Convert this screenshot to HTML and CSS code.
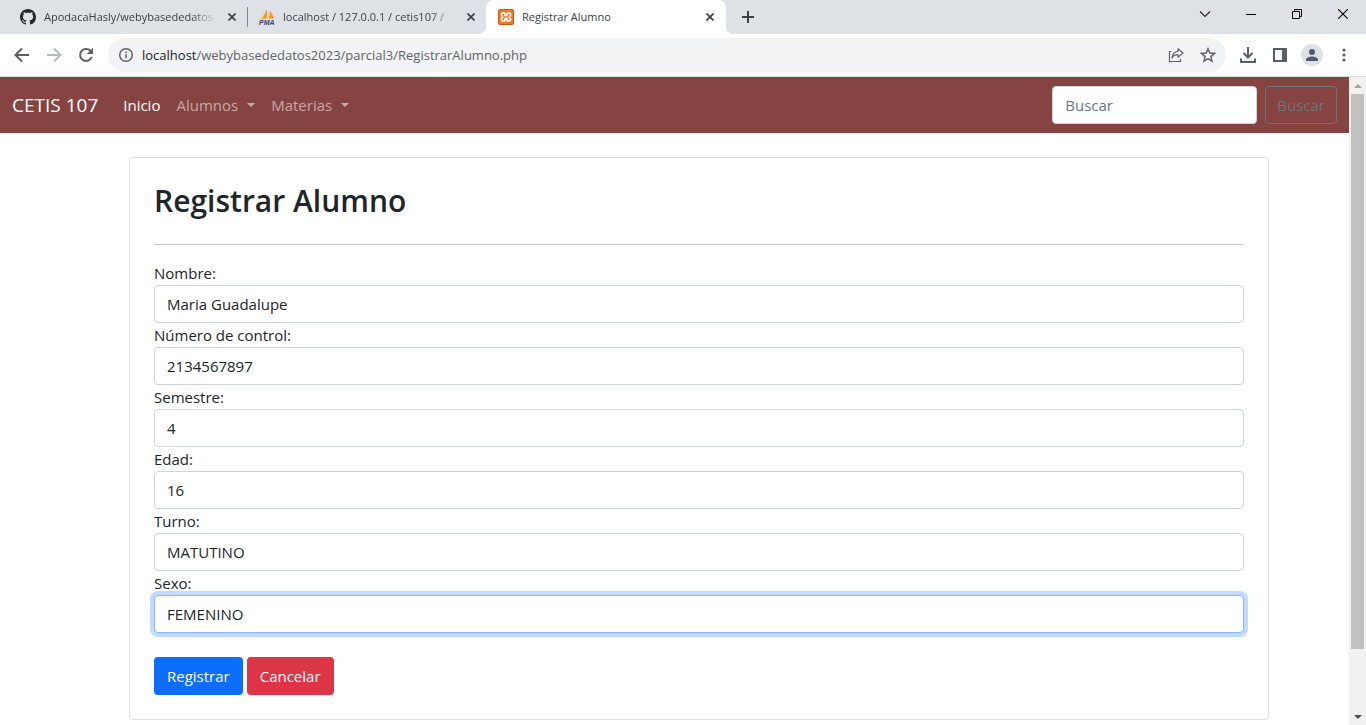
FILE: index.html
```html
<!DOCTYPE html>
<html lang="es">
<head>
<meta charset="utf-8">
<title>Registrar Alumno</title>
<link rel="stylesheet" href="styles.css">
</head>
<body>
<header class="browser">
  <div class="tabstrip">
    <div class="tab">
      <svg class="favicon" viewBox="0 0 16 16"><path fill="#24292f" d="M8 0C3.58 0 0 3.58 0 8c0 3.54 2.29 6.53 5.47 7.59.4.07.55-.17.55-.38 0-.19-.01-.82-.01-1.49-2.01.37-2.53-.49-2.69-.94-.09-.23-.48-.94-.82-1.13-.28-.15-.68-.52-.01-.53.63-.01 1.08.58 1.23.82.72 1.21 1.87.87 2.33.66.07-.52.28-.87.51-1.07-1.78-.2-3.64-.89-3.64-3.95 0-.87.31-1.59.82-2.15-.08-.2-.36-1.02.08-2.12 0 0 .67-.21 2.2.82.64-.18 1.32-.27 2-.27s1.36.09 2 .27c1.53-1.04 2.2-.82 2.2-.82.44 1.1.16 1.92.08 2.12.51.56.82 1.27.82 2.15 0 3.07-1.87 3.75-3.65 3.95.29.25.54.73.54 1.48 0 1.07-.01 1.93-.01 2.2 0 .21.15.46.55.38A8.01 8.01 0 0 0 16 8c0-4.42-3.58-8-8-8z"/></svg>
      <span class="tab-title tab-title-fade">ApodacaHasly/webybasededatos</span>
      <button class="tab-close" aria-label="Cerrar pestaña"><svg width="8" height="8" viewBox="0 0 8 8"><path d="M.5.5l7 7M7.5.5l-7 7" stroke="#3c4043" stroke-width="1.7"/></svg></button>
    </div>
    <div class="tab tab-divided">
      <svg class="favicon" viewBox="0 0 16 16"><path fill="#f8971d" d="M7.500 0C8.500 3 8.700 6 7.500 9.500L2.500 10.300C5 7 6.600 4 7.500 0zM10.500 1.500C13 4 14.300 7 15 9.700L9.500 9.400C11 6.500 11.200 4 10.500 1.500z"/><path fill="#fbc27a" d="M4.500 3C4.500 6 3 8.500 0 10.500L2.300 10.300C4.300 8 5 6 4.500 3zM9 3c1 2.500.8 4.500-.2 6.400H8z"/><text class="pma" x="0" y="15.500">PMA</text></svg>
      <span class="tab-title tab-title-fade">localhost / 127.0.0.1 / cetis107 /</span>
      <button class="tab-close" aria-label="Cerrar pestaña"><svg width="8" height="8" viewBox="0 0 8 8"><path d="M.5.5l7 7M7.500.5l-7 7" stroke="#3c4043" stroke-width="1.7"/></svg></button>
    </div>
    <div class="tab tab-active">
      <svg class="favicon" viewBox="0 0 16 16"><rect x=".5" y=".5" width="15" height="15" rx="1.500" fill="#f37623" stroke="#c85a12"/><path d="M5.300 3.800a1.900 1.900 0 0 0-1 3.500q.6.700 0 1.400a1.900 1.900 0 1 0 2.800 2.200V9.500h1.800v1.400a1.900 1.900 0 1 0 2.800-2.200q-.6-.7 0-1.400a1.900 1.900 0 1 0-2.800-2.200v1.400H7.100V5.100a1.900 1.900 0 0 0-1.800-1.300z" fill="none" stroke="#fff" stroke-width="1.700"/></svg>
      <span class="tab-title">Registrar Alumno</span>
      <button class="tab-close" aria-label="Cerrar pestaña"><svg width="8" height="8" viewBox="0 0 8 8"><path d="M.5.5l7 7M7.500.5l-7 7" stroke="#3c4043" stroke-width="1.7"/></svg></button>
    </div>
    <button class="new-tab" aria-label="Nueva pestaña"><svg width="12" height="12" viewBox="0 0 12 12"><path d="M6 0v12M0 6h12" stroke="#3c4043" stroke-width="2"/></svg></button>
    <div class="window-controls">
      <button class="window-btn" aria-label="Buscar pestañas"><svg width="12" height="12" viewBox="0 0 12 12"><path d="M1 3.500l5 5 5-5" fill="none" stroke="#222" stroke-width="1.100"/></svg></button>
      <button class="window-btn" aria-label="Minimizar"><svg width="10" height="10" viewBox="0 0 10 10"><path d="M0 5.500h10" stroke="#000"/></svg></button>
      <button class="window-btn" aria-label="Restaurar"><svg width="10" height="10" viewBox="0 0 10 10"><path d="M.5 2.500h7v7h-7zM2.500 2.500v-2h7v7h-2" fill="none" stroke="#000"/></svg></button>
      <button class="window-btn" aria-label="Cerrar"><svg width="10" height="10" viewBox="0 0 10 10"><path d="M0 0l10 10M10 0L0 10" stroke="#000" stroke-width="1.100"/></svg></button>
    </div>
  </div>
  <div class="toolbar">
    <div class="tool-group">
      <button class="tool" aria-label="Atrás"><svg width="16" height="16" viewBox="0 0 16 16"><path d="M15 8H2M8 1.500L1.500 8 8 14.500" fill="none" stroke="#5a5e63" stroke-width="2"/></svg></button>
      <button class="tool" aria-label="Adelante"><svg width="16" height="16" viewBox="0 0 16 16"><path d="M1 8h13M8 1.500L14.500 8 8 14.500" fill="none" stroke="#b9bbbe" stroke-width="2"/></svg></button>
      <button class="tool" aria-label="Recargar"><svg width="16" height="16" viewBox="0 0 16 16"><path d="M13.700 10A6 6 0 1 1 12.300 3.700L14 5.400" fill="none" stroke="#5a5e63" stroke-width="2"/><path d="M15 .8V7H8.800z" fill="#5a5e63"/></svg></button>
    </div>
    <div class="omnibox">
      <svg width="16" height="16" viewBox="0 0 16 16"><circle cx="8" cy="8" r="6.300" fill="none" stroke="#5f6368" stroke-width="1.500"/><path d="M8 7.200v4M8 4.400v1.600" stroke="#5f6368" stroke-width="1.600"/></svg>
      <span class="url"><span class="url-host">localhost</span>/webybasededatos2023/parcial3/RegistrarAlumno.php</span>
      <button class="tool" aria-label="Compartir"><svg width="16" height="16" viewBox="0 0 16 16"><path d="M3.500 4.500H1.500v10h11V12" fill="none" stroke="#5f6368" stroke-width="1.200"/><path d="M10 1.800L15 6l-5 4.200V7.700C7 7.600 5.200 8.600 4 11c.3-3.500 2.300-6.300 6-6.700z" fill="none" stroke="#5f6368" stroke-width="1.200" stroke-linejoin="round"/></svg></button>
      <button class="tool" aria-label="Añadir a marcadores"><svg width="16" height="16" viewBox="0 0 16 16"><path d="M8 1.800l1.800 4.300 4.700.4-3.600 3.100 1.100 4.600L8 11.700l-4 2.500 1.100-4.600L1.500 6.500l4.700-.4z" fill="none" stroke="#5f6368" stroke-width="1.500"/></svg></button>
    </div>
    <div class="tool-group">
      <button class="tool" aria-label="Descargas"><svg width="16" height="16" viewBox="0 0 16 16"><path d="M8 0v10M3.500 6L8 10.500 12.500 6M1 11.500V15h14v-3.500" fill="none" stroke="#5a5e63" stroke-width="2"/></svg></button>
      <button class="tool" aria-label="Panel lateral"><svg width="14" height="14" viewBox="0 0 14 14"><path d="M1 1h12v12H1z" fill="none" stroke="#5a5e63" stroke-width="2"/><path d="M9 0h5v14H9z" fill="#5a5e63"/></svg></button>
      <button class="tool" aria-label="Perfil"><svg width="22" height="22" viewBox="0 0 22 22"><circle cx="11" cy="11" r="11" fill="#dee1e6"/><circle cx="11" cy="8" r="3" fill="#515b70"/><path d="M5 17v-1.500c0-2 4-3 6-3s6 1 6 3V17z" fill="#515b70"/></svg></button>
      <button class="tool" aria-label="Menú"><svg width="4" height="14" viewBox="0 0 4 14"><g fill="#5a5e63"><circle cx="2" cy="2" r="1.600"/><circle cx="2" cy="7" r="1.600"/><circle cx="2" cy="12" r="1.600"/></g></svg></button>
    </div>
  </div>
</header>
<div class="viewport">
  <div class="page">
    <nav class="navbar">
      <a class="brand" href="#">CETIS 107</a>
      <ul class="nav-list">
        <li><a class="nav-link nav-link-active" href="#">Inicio</a></li>
        <li><a class="nav-link dropdown" href="#">Alumnos</a></li>
        <li><a class="nav-link dropdown" href="#">Materias</a></li>
      </ul>
      <form class="search">
        <input class="field search-field" type="search" placeholder="Buscar" aria-label="Buscar">
        <button class="btn btn-outline" type="button">Buscar</button>
      </form>
    </nav>
    <main class="content">
      <form class="card">
        <h1 class="title">Registrar Alumno</h1>
        <hr class="rule">
        <label class="label" for="nombre">Nombre:</label>
        <input class="field" id="nombre" type="text" value="Maria Guadalupe">
        <label class="label" for="control">Número de control:</label>
        <input class="field" id="control" type="text" value="2134567897">
        <label class="label" for="semestre">Semestre:</label>
        <input class="field" id="semestre" type="text" value="4">
        <label class="label" for="edad">Edad:</label>
        <input class="field" id="edad" type="text" value="16">
        <label class="label" for="turno">Turno:</label>
        <input class="field" id="turno" type="text" value="MATUTINO">
        <label class="label" for="sexo">Sexo:</label>
        <input class="field field-focus" id="sexo" type="text" value="FEMENINO">
        <div class="actions">
          <button class="btn btn-primary" type="button">Registrar</button>
          <button class="btn btn-danger" type="button">Cancelar</button>
        </div>
      </form>
    </main>
  </div>
  <div class="scrollbar" aria-hidden="true">
    <span class="arrow"><svg width="8" height="4" viewBox="0 0 8 4"><path d="M0 4l4-4 4 4z" fill="#a3a3a3"/></svg></span>
    <div class="track"><div class="thumb"></div></div>
    <span class="arrow"><svg width="8" height="4" viewBox="0 0 8 4"><path d="M0 0l4 4 4-4z" fill="#505050"/></svg></span>
  </div>
</div>
</body>
</html>
```
FILE: styles.css
```css
* { box-sizing: border-box; }
body {
  margin: 0;
  min-height: 100vh;
  display: flex;
  flex-direction: column;
  font-family: "Open Sans", "Noto Sans", sans-serif;
  font-size: 15px;
  line-height: 24px;
  color: #212529;
  background: #fff;
}
button, input { font: inherit; }
button { cursor: pointer; }
svg { display: block; flex: none; }

/* Browser frame */
.tabstrip {
  display: flex;
  height: 34px;
  padding-left: 8px;
  background: #dee1e6;
}
.tab {
  position: relative;
  display: flex;
  align-items: center;
  gap: 8px;
  flex: 0 1 239px;
  min-width: 0;
  padding: 0 7px 0 12px;
  font-size: 11px;
  color: #3c4043;
}
.tab-divided::before {
  content: "";
  position: absolute;
  left: 0;
  top: 7px;
  width: 1px;
  height: 20px;
  background: #808387;
}
.tab-active {
  flex-basis: 240px;
  padding-right: 8px;
  background: #fff;
  border-radius: 8px 8px 0 0;
}
.tab-active::before, .tab-active::after {
  content: "";
  position: absolute;
  bottom: 0;
  width: 8px;
  height: 8px;
}
.tab-active::before {
  left: -8px;
  background: radial-gradient(circle at 0 0, #dee1e6 8px, #fff 8px);
}
.tab-active::after {
  right: -8px;
  background: radial-gradient(circle at 100% 0, #dee1e6 8px, #fff 8px);
}
.favicon { width: 16px; height: 16px; }
.pma { font: italic bold 7px "Liberation Sans", sans-serif; fill: #3c3c78; }
.tab-title {
  flex: 1;
  min-width: 0;
  white-space: nowrap;
}
.tab-title-fade {
  mask-image: linear-gradient(to right, #000 calc(100% - 24px), transparent);
}
.tab-close, .new-tab, .window-btn, .tool {
  display: flex;
  align-items: center;
  justify-content: center;
  flex: none;
  padding: 0;
  border: 0;
  background: none;
}
.tab-close { width: 16px; height: 16px; }
.new-tab { width: 28px; margin-left: 8px; }
.window-controls { display: flex; margin-left: auto; height: 28px; }
.window-btn { width: 46px; }
.toolbar {
  display: flex;
  align-items: center;
  gap: 6px;
  height: 43px;
  padding: 0 6px;
  border-bottom: 1px solid #d9dbdd;
}
.tool-group { display: flex; }
.tool { width: 32px; height: 32px; }
.omnibox {
  display: flex;
  align-items: center;
  flex: 1;
  min-width: 0;
  height: 34px;
  padding: 0 2px 0 10px;
  border-radius: 17px;
  background: #f1f3f4;
  font-size: 13px;
}
.url {
  flex: 1;
  min-width: 0;
  overflow: hidden;
  white-space: nowrap;
  padding-left: 8px;
  color: #5f6368;
}
.url-host { color: #202124; }

/* Viewport */
.viewport { display: flex; flex: 1; }
.page { flex: 1; min-width: 0; }
.scrollbar {
  display: flex;
  flex-direction: column;
  width: 17px;
  background: #f1f1f1;
}
.arrow {
  display: flex;
  align-items: center;
  justify-content: center;
  height: 17px;
}
.track { flex: 1; padding: 0 2px; display: flex; }
.thumb { flex: 1; height: 90.4%; background: #c1c1c1; }

/* Navigation */
.navbar {
  display: flex;
  align-items: center;
  padding: 9px 12px;
  background: #854442;
}
.brand {
  margin-right: 17px;
  font-size: 19px;
  color: #fff;
  text-decoration: none;
}
.nav-list {
  display: flex;
  margin: 0;
  padding: 0;
  list-style: none;
}
.nav-link {
  display: block;
  padding: 0 8px;
  color: rgba(255, 255, 255, .55);
  text-decoration: none;
}
.nav-link-active { color: #fff; }
.dropdown::after {
  content: "";
  display: inline-block;
  margin-left: 9px;
  vertical-align: 4px;
  border: 4px solid transparent;
  border-top-color: currentColor;
  border-bottom: 0;
}
.search { display: flex; gap: 8px; margin-left: auto; }
.search .search-field { width: 205px; }

/* Form */
.content { padding: 24px 0 0 49px; }
.card {
  max-width: 1140px;
  margin: 0 auto;
  padding: 24px;
  border: 1px solid #dfdfdf;
  border-radius: 4px;
}
.title {
  margin: 0 0 24px;
  font-size: 30px;
  font-weight: 600;
  line-height: 38px;
}
.rule {
  margin: 0 0 16px;
  border: 0;
  border-top: 1px solid #c7c8c9;
}
.label { display: block; }
.field {
  display: block;
  width: 100%;
  height: 38px;
  padding: 6px 12px;
  border: 1px solid #ced4da;
  border-radius: 4px;
  background: #fff;
  color: #212529;
  outline: 0;
}
.field::placeholder { color: #6c757d; opacity: 1; }
.field:focus, .field-focus {
  border-color: #86b7fe;
  box-shadow: 0 0 0 4px #c2dbfe;
}
.actions { display: flex; gap: 4px; margin-top: 24px; }
.btn {
  height: 38px;
  padding: 6px 12px;
  border: 1px solid transparent;
  border-radius: 4px;
  line-height: 24px;
  color: #fff;
}
.btn-primary { background: #0d6efd; }
.btn-danger { background: #dc3545; }
.btn-outline { padding: 6px 11px; border-color: #6c757d; background: none; color: #6c757d; }
```
